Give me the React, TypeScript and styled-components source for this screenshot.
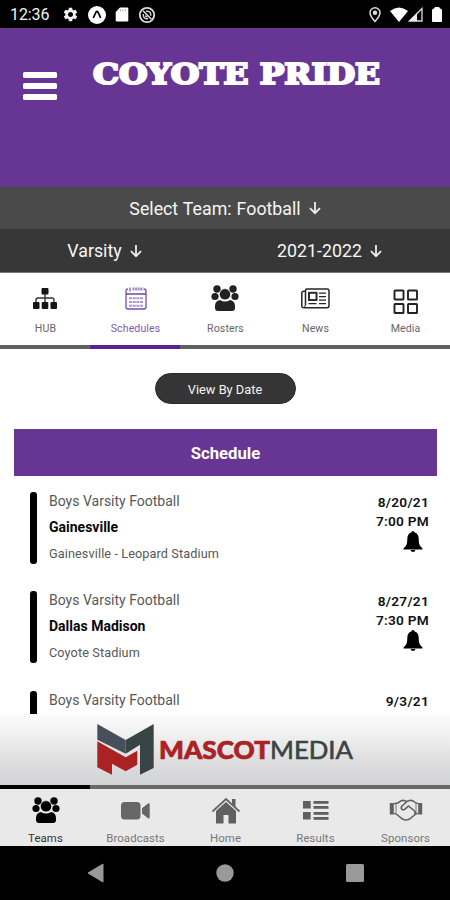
import React from "react";
import styled, { createGlobalStyle } from "styled-components";
import { MdSettings } from "react-icons/md";

const Global = createGlobalStyle`
  * { box-sizing: border-box; }
  body { margin: 0; background: #fff; font-family: Roboto, "Liberation Sans", sans-serif; }
  svg { display: block; flex: none; }
`;

const Screen = styled.div`
  width: 450px;
  height: 900px;
  display: flex;
  flex-direction: column;
  overflow: hidden;
  background: #fff;
`;

const StatusBar = styled.div`
  height: 28px;
  flex: none;
  background: #000;
  color: #f2f2f2;
  display: flex;
  align-items: center;
  justify-content: space-between;
  padding: 1px 8px 0 10px;
`;

const StatusGroup = styled.div<{ $gap: number }>`
  display: flex;
  align-items: center;
  gap: ${(p) => p.$gap}px;
`;

const Clock = styled.span`
  font-size: 16px;
  line-height: 18px;
  width: 43px;
  letter-spacing: -0.1px;
  padding-top: 1px;
`;

const Header = styled.header`
  height: 159px;
  flex: none;
  background: #673694;
  display: flex;
  align-items: flex-start;
  padding: 27px 0 0 23px;
`;

const MenuButton = styled.button`
  border: 0;
  padding: 0;
  margin: 17px 35px 0 0;
  background: none;
  width: 34px;
  display: flex;
  flex-direction: column;
  gap: 5px;
`;

const MenuLine = styled.span`
  height: 6px;
  border-radius: 1.5px;
  background: #fff;
`;

const SelectRow = styled.div<{ $tone: string; $height: number }>`
  height: ${(p) => p.$height}px;
  flex: none;
  background: ${(p) => p.$tone};
  display: flex;
`;

const Picker = styled.div<{ $width: number }>`
  width: ${(p) => p.$width}px;
  display: flex;
  align-items: center;
  justify-content: center;
  gap: 8px;
  color: #f6f6f6;
  font-size: 17.8px;
  word-spacing: 0.6px;
  white-space: pre;
`;

const Tabs = styled.nav<{ $bottom?: boolean }>`
  flex: none;
  display: grid;
  grid-template-columns: repeat(5, 90px);
  height: ${(p) => (p.$bottom ? 61 : 77)}px;
  background: ${(p) => (p.$bottom ? "#e9e9e9" : "#fff")};
  border-top: ${(p) => (p.$bottom ? "0" : "1px solid #777")};
`;

const TabItem = styled.div<{ $active?: boolean; $bottom?: boolean }>`
  display: flex;
  flex-direction: column;
  align-items: center;
  border-style: solid;
  border-width: ${(p) => (p.$bottom ? "4px 0 0" : "0 0 4px")};
  border-color: ${(p) =>
    p.$active ? (p.$bottom ? "#000" : "#582390") : p.$bottom ? "#696969" : "#606060"};
  color: ${(p) => (p.$active ? (p.$bottom ? "#333" : "#8259b5") : p.$bottom ? "#777" : "#666")};
`;

const TabIcon = styled.div<{ $bottom?: boolean; $drop?: number; $shift?: number }>`
  height: ${(p) => (p.$bottom ? 40 : 49)}px;
  padding-top: ${(p) => 2 + (p.$drop ?? 0)}px;
  padding-left: ${(p) => p.$shift ?? 1}px;
  display: flex;
  align-items: center;
  justify-content: center;
`;

const TabLabel = styled.span<{ $bottom?: boolean }>`
  font-size: ${(p) => (p.$bottom ? 11.4 : 10.6)}px;
  line-height: 14px;
  letter-spacing: 0.1px;
  padding-top: ${(p) => (p.$bottom ? 2 : 0)}px;
  padding-left: 1px;
`;

const Content = styled.main`
  height: 365px;
  flex: none;
  overflow: hidden;
  display: flex;
  flex-direction: column;
  padding: 24px 13px 0 14px;
`;

const Pill = styled.button`
  align-self: center;
  flex: none;
  width: 141px;
  height: 31px;
  border: 1px solid #2b2b2b;
  border-radius: 16px;
  background: #353535;
  color: #f5f5f5;
  font: 400 12.8px Roboto, sans-serif;
  padding: 1px 1px 0 0;
`;

const SectionTitle = styled.h2`
  margin: 25px 0 16px;
  flex: none;
  height: 47px;
  background: #673694;
  color: #fff;
  font-size: 16.7px;
  font-weight: 700;
  line-height: 49px;
  text-align: center;
`;

const Game = styled.article`
  height: 72px;
  flex: none;
  margin-bottom: 27.3px;
  padding: 0 8px 0 16px;
  display: flex;
`;

const Marker = styled.div`
  width: 7px;
  border-radius: 3px;
  background: #000;
  margin-right: 12px;
`;

const GameInfo = styled.div`
  flex: 1;
  display: flex;
  flex-direction: column;
  color: #585858;
`;

const GameSport = styled.span`
  font-size: 14px;
  line-height: 18px;
`;

const Opponent = styled.strong`
  font-size: 14px;
  line-height: 18px;
  margin: 8px 0 9px;
  color: #080808;
  font-weight: 700;
`;

const Venue = styled.span`
  font-size: 12.7px;
  line-height: 17px;
  letter-spacing: 0.1px;
`;

const GameWhen = styled.div`
  display: flex;
  flex-direction: column;
  align-items: flex-end;
  font-size: 13.7px;
  line-height: 19px;
  font-weight: 600;
  letter-spacing: 0.25px;
  color: #111;
  padding-top: 1px;
`;

const Sponsor = styled.div`
  height: 71px;
  flex: none;
  display: flex;
  padding-left: 97px;
  background: linear-gradient(#fcfcfc 0%, #f2f2f2 25%, #e0e0e1 62%, #d1d2d4 100%);
`;

const SystemBar = styled.div`
  height: 54px;
  flex: none;
  background: #000;
  display: grid;
  grid-template-columns: 190px 70px 190px;
  justify-items: center;
  align-items: center;
`;

const BellSvg = styled.svg`
  margin: 0 6px 0 0;
`;

const BellIcon = () => (
  <BellSvg width="20" height="21" viewBox="0 0 20 21">
    <path
      d="M10 0q1.500 0 1.700 1.500Q15.700 2.700 15.700 8q0 5 1.500 7l2.300 2.500v.9H.5v-.9L2.800 15q1.500-2 1.500-7 0-5.300 4-6.500Q8.500 0 10 0zM7.500 19h5q-.5 1.900-2.500 1.900T7.500 19z"
      fill="#000"
    />
  </BellSvg>
);

const DownArrow = () => (
  <svg width="12" height="14" viewBox="0 0 12 14" fill="none" stroke="#eee" strokeWidth="1.8">
    <path d="M6 1v11M1 7.2l5 5 5-5" />
  </svg>
);

const PeopleIcon = ({ color = "#000", halo = "#eee" }: { color?: string; halo?: string }) => (
  <svg width="28" height="27" viewBox="0 0 28 27" fill={color}>
    <circle cx="6" cy="4" r="3.7" />
    <circle cx="22" cy="4" r="3.7" />
    <circle cx="4" cy="11.5" r="3.6" />
    <circle cx="24" cy="11.5" r="3.6" />
    <path d="M9 15q5 3.2 10 0q5 1 5 6v2q0 3-3 3H7q-3 0-3-3v-2q0-5 5-6z" />
    <circle cx="14" cy="9.3" r="5.7" stroke={halo} strokeWidth=".8" />
  </svg>
);

const HubIcon = () => (
  <svg width="26" height="23" viewBox="0 0 26 23">
    <path d="M13 7v8M4 16v-3q0-2 2-2h14q2 0 2 2v3" fill="none" stroke="#333" strokeWidth="1.4" />
    <g fill="#161616">
      <rect x="9.5" y="1" width="7" height="6.5" rx="1" />
      <rect x="1" y="15" width="6.5" height="7" rx="1" />
      <rect x="9.7" y="15" width="6.6" height="7" rx="1" />
      <rect x="18.5" y="15" width="6.5" height="7" rx="1" />
    </g>
  </svg>
);

const CalendarIcon = () => (
  <svg width="22" height="23" viewBox="0 0 22 23" fill="none" stroke="#774dad">
    <path d="M3 2q-2 0-2 2v16q0 2 2 2h16q2 0 2-2V4q0-2-2-2" strokeWidth="1.3" />
    <path d="M5 .5v4" strokeWidth="1.2" />
    <path d="M7.5 2h11" strokeWidth="3" strokeDasharray="2 .6" opacity=".65" />
    <path d="M1 7h20" strokeWidth="1.6" />
    <path d="M4 11.2h14M4 15h14M4 18.8h14" strokeWidth="2" strokeDasharray="3 .7" opacity=".6" />
  </svg>
);

const NewsIcon = () => (
  <svg width="29" height="21" viewBox="0 0 29 21" fill="none" stroke="#262626" strokeWidth="1.5">
    <path d="M4.500 17V2.200q0-1.200 1.200-1.200h20.600q1.700 0 1.700 1.700v15q0 2-2 2H3q-2.200 0-2.200-2V5q0-1.700 2-1.700h1.500" />
    <path d="M4.500 16.500q0 2.500-2 3" strokeWidth="1" />
    <rect x="8" y="4.800" width="7.500" height="7.200" strokeWidth="1.900" />
    <path d="M18 5.200h7M18 8.700h7M18 12.200h7M7.500 15.700h8M18 15.700h7" strokeWidth="1.200" />
  </svg>
);

const GridIcon = () => (
  <svg width="26" height="26" viewBox="0 0 26 26" fill="none" stroke="#222" strokeWidth="1.9">
    <rect x="1.5" y="1.5" width="9" height="9" rx=".6" />
    <rect x="15" y="1.5" width="9" height="9" rx=".6" />
    <rect x="1.5" y="15" width="9" height="9" rx=".6" />
    <rect x="15" y="15" width="9" height="9" rx=".6" />
  </svg>
);

const CameraIcon = () => (
  <svg width="30" height="18" viewBox="0 0 30 18" fill="#666">
    <rect x="0" y="0" width="19.5" height="17.5" rx="3.5" />
    <path d="M21 6.2L27 1.6q1.7-.8 1.7 1v12.6q0 1.8-1.7 1L21 11.5z" />
  </svg>
);

const HomeIcon = () => (
  <svg width="30" height="27" viewBox="0 0 30 27">
    <path d="M5 14l10-9 10 9v12.5h-7.5V18h-5v8.5H5z" fill="#606060" />
    <path d="M21 2h3.500v8L21 7z" fill="#606060" />
    <path d="M1.500 14.500L15 2l13.500 12.500" fill="none" stroke="#666" strokeWidth="1.800" />
  </svg>
);

const ResultsIcon = () => (
  <svg width="28" height="20" viewBox="0 0 28 20" fill="#606060">
    <rect x="1" y="1" width="7.7" height="7.5" />
    <rect x="1" y="12" width="7.7" height="7.5" />
    <rect x="11.5" y="1" width="15" height="2.8" />
    <rect x="11.5" y="6" width="15" height="2.8" />
    <rect x="11.5" y="12" width="15" height="2.8" />
    <rect x="11.5" y="17" width="15" height="2.8" />
  </svg>
);

const HandshakeIcon = () => (
  <svg width="34" height="22" viewBox="0 0 34 22" fill="none" stroke="#606060" strokeWidth="1.600">
    <path d="M2.800 4v11.500M31.200 4v11.500" strokeWidth="4" />
    <path d="M5 4.500q3.500.2 5.500-1.700 2-1.800 4.500-1.300l2.500 1 3-1q3-.6 5 1.500 1.500 1.500 3.500 1.500M5 14.500q2 0 3.500 1.500l5 4q3.500 2 7 0l5-4q1.500-1.500 3.500-1.500" />
    <path d="M18 2.500l-5 4.500q-1.500 2 0 3.300 1.600 1.200 3.300-.4L19.500 7l6 5q1.500 1.700 0 3.300" />
    <path d="M7 5v9M27 5v9" strokeWidth=".8" />
  </svg>
);

const ExpoIcon = () => (
  <svg width="18" height="18" viewBox="0 0 18 18">
    <circle cx="9" cy="9" r="9" fill="#fff" />
    <path d="M5.300 11.800L8 6.200q1-1.800 2 0l2.700 5.600" fill="none" stroke="#000" strokeWidth="1.700" />
  </svg>
);

const CardIcon = () => (
  <svg width="14" height="15" viewBox="0 0 14 15">
    <path d="M5 .5h7q1.300 0 1.300 1.300v11.400q0 1.300-1.300 1.300H2q-1.300 0-1.300-1.300V5z" fill="#fff" />
    <path d="M5.500 2v2.500M8 2v2.500M10.500 2v2.500" stroke="#aaa" strokeWidth=".8" />
  </svg>
);

const BlockedIcon = () => (
  <svg width="18" height="18" viewBox="0 0 18 18" fill="none" stroke="#ddd">
    <circle cx="9" cy="9" r="7.200" strokeWidth="1.800" />
    <path d="M5 4.800l8.400 8.500" strokeWidth="1.600" />
    <path d="M8 5.200q5-.5 4.800 4.500M5.300 8q-.6 5 4.800 4.800M7.400 9.500q.5 1.400 2 1.200" strokeWidth="1.400" />
  </svg>
);

const PinIcon = () => (
  <svg width="12" height="16" viewBox="0 0 12 16" fill="none" stroke="#ddd" strokeWidth="1.5">
    <path d="M6 14.500Q1 9 1 5.800a5 5 0 0110 0Q11 9 6 14.500z" />
    <circle cx="6" cy="5.800" r="1.500" fill="#ddd" />
  </svg>
);

const WifiIcon = () => (
  <svg width="18" height="15" viewBox="0 0 18 15">
    <path d="M0 4Q9-3 18 4L9 15z" fill="#fff" />
  </svg>
);

const SignalIcon = () => (
  <svg width="15" height="15" viewBox="0 0 15 15">
    <path d="M14 1.500V14H1.500z" fill="none" stroke="#ddd" strokeWidth="1.300" />
    <path d="M9 6v8H1z" fill="#eee" />
  </svg>
);

const BatteryIcon = () => (
  <svg width="10" height="15" viewBox="0 0 10 15" fill="#fff">
    <path d="M3 0h4l1 1.500q2 0 2 2V14q0 1-1 1H1q-1 0-1-1V3.500q0-2 2-2z" />
  </svg>
);

const TeamWordmark = () => (
  <svg width="294" height="36" viewBox="0 0 294 36">
    <text
      x="1"
      y="29"
      textLength="287"
      lengthAdjust="spacingAndGlyphs"
      fontFamily="'DejaVu Serif', serif"
      fontWeight="700"
      fontSize="28.5"
      fill="#fff"
      stroke="#fff"
      strokeWidth="2.2"
    >
      COYOTE PRIDE
    </text>
  </svg>
);

const SponsorLogo = () => (
  <svg width="260" height="71" viewBox="0 0 260 71">
    <path d="M28.700 26l28-16v44L43 60.700v-30l-14.300 9z" fill="#394444" />
    <path d="M.3 10l28.400 16v13.700L.3 25.700z" fill="#46505b" />
    <path d="M.3 27.300l28.400 16 11.600-6.600v14l-11.600 6.600L15 49.700v11L.3 53.300z" fill="#ab2225" />
    <text
      x="62"
      y="44.500"
      textLength="111"
      lengthAdjust="spacingAndGlyphs"
      fontFamily="Lato, sans-serif"
      fontWeight="900"
      fontSize="25"
      fill="#ab2225"
      stroke="#ab2225"
      strokeWidth=".7"
    >
      MASCOT
    </text>
    <text
      x="173"
      y="44.500"
      textLength="83"
      lengthAdjust="spacingAndGlyphs"
      fontFamily="Lato, sans-serif"
      fontSize="25"
      fill="#394444"
      stroke="#394444"
      strokeWidth=".6"
    >
      MEDIA
    </text>
  </svg>
);

type Tab = { label: string; icon: React.ReactNode; active?: boolean; drop?: number; shift?: number };

const teamTabs: Tab[] = [
  { label: "HUB", icon: <HubIcon />, shift: 0 },
  { label: "Schedules", icon: <CalendarIcon />, active: true },
  { label: "Rosters", icon: <PeopleIcon color="#222" halo="#fff" />, shift: 0 },
  { label: "News", icon: <NewsIcon /> },
  { label: "Media", icon: <GridIcon />, drop: 6 },
];

const mainTabs: Tab[] = [
  { label: "Teams", icon: <PeopleIcon />, active: true },
  { label: "Broadcasts", icon: <CameraIcon />, drop: 2 },
  { label: "Home", icon: <HomeIcon />, drop: 1 },
  { label: "Results", icon: <ResultsIcon /> },
  { label: "Sponsors", icon: <HandshakeIcon /> },
];

const games = [
  { opponent: "Gainesville", venue: "Gainesville - Leopard Stadium", date: "8/20/21", time: "7:00 PM" },
  { opponent: "Dallas Madison", venue: "Coyote Stadium", date: "8/27/21", time: "7:30 PM" },
  { opponent: "", venue: "", date: "9/3/21", time: "" },
];

export default function App() {
  return (
    <Screen>
      <Global />
      <StatusBar>
        <StatusGroup $gap={9}>
          <Clock>12:36</Clock>
          <MdSettings size={17} />
          <ExpoIcon />
          <CardIcon />
          <BlockedIcon />
        </StatusGroup>
        <StatusGroup $gap={9}>
          <PinIcon />
          <StatusGroup $gap={0}>
            <WifiIcon />
            <SignalIcon />
          </StatusGroup>
          <BatteryIcon />
        </StatusGroup>
      </StatusBar>
      <Header>
        <MenuButton aria-label="Menu">
          <MenuLine />
          <MenuLine />
          <MenuLine />
        </MenuButton>
        <TeamWordmark />
      </Header>
      <SelectRow $tone="#4a4a4a" $height={42}>
        <Picker $width={450}>
          Select Team: Football
          <DownArrow />
        </Picker>
      </SelectRow>
      <SelectRow $tone="#373737" $height={43}>
        <Picker $width={209}>
          Varsity
          <DownArrow />
        </Picker>
        <Picker $width={241}>
          2021-2022
          <DownArrow />
        </Picker>
      </SelectRow>
      <Tabs>
        {teamTabs.map((t) => (
          <TabItem key={t.label} $active={t.active}>
            <TabIcon $drop={t.drop} $shift={t.shift}>{t.icon}</TabIcon>
            <TabLabel>{t.label}</TabLabel>
          </TabItem>
        ))}
      </Tabs>
      <Content>
        <Pill>View By Date</Pill>
        <SectionTitle>Schedule</SectionTitle>
        {games.map((g) => (
          <Game key={g.date}>
            <Marker />
            <GameInfo>
              <GameSport>Boys Varsity Football</GameSport>
              <Opponent>{g.opponent}</Opponent>
              <Venue>{g.venue}</Venue>
            </GameInfo>
            <GameWhen>
              <span>{g.date}</span>
              {g.time && <span>{g.time}</span>}
              {g.time && <BellIcon />}
            </GameWhen>
          </Game>
        ))}
      </Content>
      <Sponsor>
        <SponsorLogo />
      </Sponsor>
      <Tabs $bottom>
        {mainTabs.map((t) => (
          <TabItem key={t.label} $active={t.active} $bottom>
            <TabIcon $bottom $drop={t.drop} $shift={t.shift}>{t.icon}</TabIcon>
            <TabLabel $bottom>{t.label}</TabLabel>
          </TabItem>
        ))}
      </Tabs>
      <SystemBar>
        <svg width="17" height="20" viewBox="0 0 17 20">
          <path d="M1 10L16 1v18z" fill="#999" stroke="#999" strokeLinejoin="round" />
        </svg>
        <svg width="18" height="18" viewBox="0 0 18 18">
          <circle cx="9" cy="9" r="8.700" fill="#999" />
        </svg>
        <svg width="18" height="18" viewBox="0 0 18 18">
          <rect width="18" height="18" rx="1.500" fill="#999" />
        </svg>
      </SystemBar>
    </Screen>
  );
}
